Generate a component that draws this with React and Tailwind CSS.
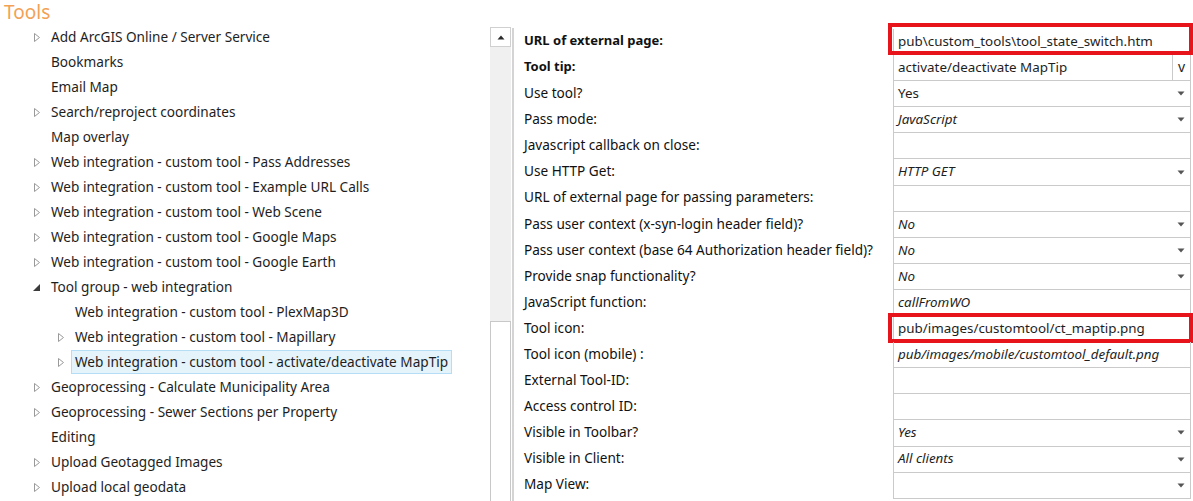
import React from "react";

const tree = [
  { t: "Add ArcGIS Online / Server Service", lvl: 1, ic: "c" },
  { t: "Bookmarks", lvl: 1 },
  { t: "Email Map", lvl: 1 },
  { t: "Search/reproject coordinates", lvl: 1, ic: "c" },
  { t: "Map overlay", lvl: 1 },
  { t: "Web integration - custom tool - Pass Addresses", lvl: 1, ic: "c" },
  { t: "Web integration - custom tool - Example URL Calls", lvl: 1, ic: "c" },
  { t: "Web integration - custom tool - Web Scene", lvl: 1, ic: "c" },
  { t: "Web integration - custom tool - Google Maps", lvl: 1, ic: "c" },
  { t: "Web integration - custom tool - Google Earth", lvl: 1, ic: "c" },
  { t: "Tool group - web integration", lvl: 1, ic: "e" },
  { t: "Web integration - custom tool - PlexMap3D", lvl: 2 },
  { t: "Web integration - custom tool - Mapillary", lvl: 2, ic: "c" },
  { t: "Web integration - custom tool - activate/deactivate MapTip", lvl: 2, ic: "c", sel: true },
  { t: "Geoprocessing - Calculate Municipality Area", lvl: 1, ic: "c" },
  { t: "Geoprocessing - Sewer Sections per Property", lvl: 1, ic: "c" },
  { t: "Editing", lvl: 1 },
  { t: "Upload Geotagged Images", lvl: 1, ic: "c" },
  { t: "Upload local geodata", lvl: 1, ic: "c" },
];

const props = [
  { l: "URL of external page:", b: true, v: "pub\\custom_tools\\tool_state_switch.htm", red: "a" },
  { l: "Tool tip:", b: true, v: "activate/deactivate MapTip", btn: true },
  { l: "Use tool?", v: "Yes", dd: true },
  { l: "Pass mode:", v: "JavaScript", i: true, dd: true },
  { l: "Javascript callback on close:", v: "" },
  { l: "Use HTTP Get:", v: "HTTP GET", i: true, dd: true },
  { l: "URL of external page for passing parameters:", v: "" },
  { l: "Pass user context (x-syn-login header field)?", v: "No", i: true, dd: true },
  { l: "Pass user context (base 64 Authorization header field)?", v: "No", i: true, dd: true },
  { l: "Provide snap functionality?", v: "No", i: true, dd: true },
  { l: "JavaScript function:", v: "callFromWO", i: true },
  { l: "Tool icon:", v: "pub/images/customtool/ct_maptip.png", red: "b" },
  { l: "Tool icon (mobile) :", v: "pub/images/mobile/customtool_default.png", i: true },
  { l: "External Tool-ID:", v: "" },
  { l: "Access control ID:", v: "" },
  { l: "Visible in Toolbar?", v: "Yes", i: true, dd: true },
  { l: "Visible in Client:", v: "All clients", i: true, dd: true },
  { l: "Map View:", v: "", dd: true },
];

function Collapsed() {
  return (
    <svg width="8" height="11" viewBox="0 0 8 11">
      <path d="M1.5 1.5 L6.5 5.5 L1.5 9.5 Z" fill="none" stroke="#9a9a9a" strokeWidth="1" />
    </svg>
  );
}
function Expanded() {
  return (
    <svg width="8" height="11" viewBox="0 0 8 11">
      <path d="M7 2 L7 9 L0 9 Z" fill="#3c3c3c" />
    </svg>
  );
}
function DDArrow() {
  return (
    <svg width="8" height="5" viewBox="0 0 8 5">
      <path d="M0.5 0.5 L7.5 0.5 L4 4.5 Z" fill="#555" />
    </svg>
  );
}

export default function App() {
  return (
    <div className="w-[1193px] h-[501px] bg-white flex overflow-hidden font-['Noto_Sans',sans-serif] text-[#1e1e1e]">
      {/* tree */}
      <div className="w-[490px] flex flex-col shrink-0">
        <div className="h-[24.5px] pl-[4px] text-[19px] leading-[25px] text-[#f3a155]">Tools</div>
        {tree.map((r, k) => (
          <div key={k} className={`h-[25px] flex items-center ${r.lvl === 1 ? "pl-[33px]" : "pl-[57px]"}`}>
            <div className="w-[14px] flex items-center">
              {r.ic === "c" && <Collapsed />}
              {r.ic === "e" && <Expanded />}
            </div>
            <div
              className={`h-[24px] flex items-center px-[3px] border text-[13.6px] whitespace-nowrap ${
                r.sel ? "bg-[#e5f3fb] border-[#b5ddf5]" : "border-transparent"
              }`}
            >
              {r.t}
            </div>
          </div>
        ))}
      </div>

      {/* scrollbar */}
      <div className="w-[21px] shrink-0 pt-[27px] flex flex-col">
        <div className="h-[20px] border border-[#d0d0d0] bg-white flex items-center justify-center">
          <svg width="8" height="5" viewBox="0 0 8 5">
            <path d="M0.5 4.5 L7.5 4.5 L4 0.5 Z" fill="#2a2a2a" />
          </svg>
        </div>
        <div className="h-[274px] bg-[#f0f0f0]" />
        <div className="flex-1 border border-[#c8c8c8] border-b-0 bg-white" />
      </div>

      {/* separator */}
      <div className="ml-[1px] mt-[28px] w-[2px] bg-[#d4d4d4] shrink-0" />

      {/* property grid */}
      <div className="pl-[10px] pt-[29px] flex flex-col">
        {props.map((p, k) => (
          <div key={k} className="h-[26.1px] flex">
            <div
              className={`w-[369px] flex items-center pb-[2px] whitespace-nowrap text-[#111] ${
                p.b ? "font-bold text-[13px]" : "text-[13.6px]"
              }`}
            >
              {p.l}
            </div>
            <div className="relative w-[298px] flex border-x border-b border-[#cacaca] text-[13.4px]">
              <div className={`flex-1 flex items-center pl-[4px] pb-[1px] whitespace-nowrap ${p.i ? "italic" : ""}`}>
                {p.v}
              </div>
              {p.dd && (
                <div className="w-[18px] flex items-center justify-center">
                  <DDArrow />
                </div>
              )}
              {p.btn && (
                <div className="w-[18px] border-l border-[#cacaca] flex items-center justify-center pb-[2px] text-[14px]">
                  v
                </div>
              )}
              {p.red === "a" && (
                <div className="absolute left-[-6px] right-[-3px] top-[-6px] bottom-[-1px] border-[4px] border-[#e8141c]" />
              )}
              {p.red === "b" && (
                <div className="absolute left-[-6px] right-[-3px] top-[-3px] bottom-[-2px] border-[4px] border-[#e8141c]" />
              )}
            </div>
          </div>
        ))}
      </div>
    </div>
  );
}
